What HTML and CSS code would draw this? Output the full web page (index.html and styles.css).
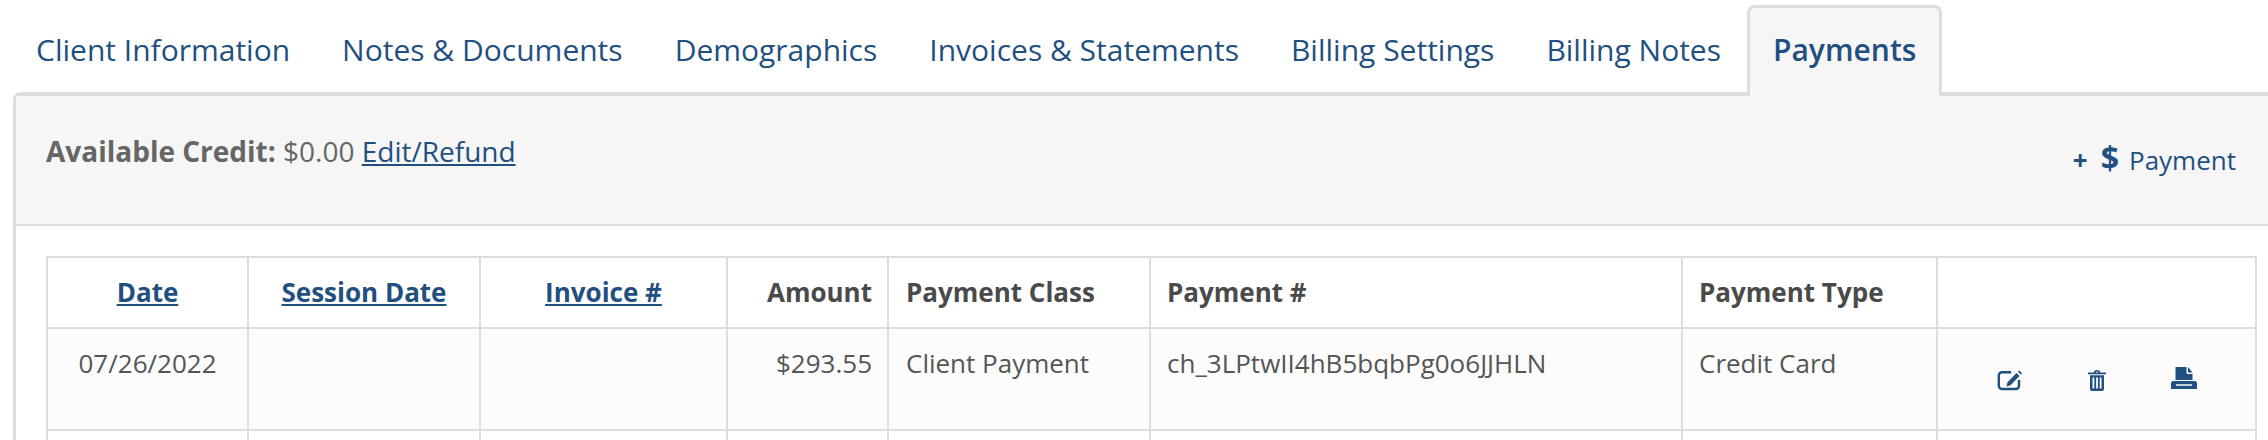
FILE: index.html
```html
<!DOCTYPE html>
<html lang="en">
<head>
    <meta charset="UTF-8">
    <title>Payments</title>
    <link rel="stylesheet" href="styles.css">
</head>
<body>
    <ul class="tabs">
        <li><a href="#">Client Information</a></li>
        <li><a href="#">Notes &amp; Documents</a></li>
        <li><a href="#">Demographics</a></li>
        <li><a href="#">Invoices &amp; Statements</a></li>
        <li><a href="#">Billing Settings</a></li>
        <li><a href="#">Billing Notes</a></li>
        <li class="active"><a href="#">Payments</a></li>
    </ul>
    <div class="panel">
        <div class="panel-head">
            <p class="credit"><strong>Available Credit:</strong> $0.00 <a href="#">Edit/Refund</a></p>
            <a class="add-payment" href="#"><span class="plus">+</span><span class="dollar">$</span>Payment</a>
        </div>
        <div class="panel-body">
            <table class="payments">
                <colgroup>
                    <col class="c-date"><col class="c-session"><col class="c-invoice"><col class="c-amount">
                    <col class="c-class"><col class="c-number"><col class="c-type"><col class="c-actions">
                </colgroup>
                <thead>
                    <tr>
                        <th class="center"><a href="#">Date</a></th>
                        <th class="center"><a href="#">Session Date</a></th>
                        <th class="center"><a href="#">Invoice #</a></th>
                        <th class="right">Amount</th>
                        <th class="pay-class">Payment Class</th>
                        <th>Payment #</th>
                        <th>Payment Type</th>
                        <th></th>
                    </tr>
                </thead>
                <tbody>
                    <tr class="shaded">
                        <td class="center">07/26/2022</td>
                        <td></td>
                        <td></td>
                        <td class="right">$293.55</td>
                        <td class="pay-class">Client Payment</td>
                        <td>ch_3LPtwII4hB5bqbPg0o6JJHLN</td>
                        <td>Credit Card</td>
                        <td class="actions">
                            <div class="action-row">
                                <a href="#" class="act-low"><svg width="26" height="21" viewBox="0 0 26 21"><path class="outline" d="M14 2.200H5a3.200 3.200 0 0 0-3.200 3.200v10.400a3.200 3.200 0 0 0 3.200 3.200h13.800a3.200 3.200 0 0 0 3.200-3.200V10"/><path d="M9.500 16.500l1-4.300 9-9.200 3 3-9 9.200zM21 1.800l1.300-1.300 2.800 2.800-1.300 1.300z"/></svg></a>
                                <a href="#" class="act-low"><svg width="18" height="21" viewBox="0 0 18 21"><path fill-rule="evenodd" d="M5.800 2.400C6 .8 7.300 0 9 0s3 .8 3.200 2.400H18V4.200H0V2.400zM7.500 2.400h3C10.300 1.700 9.800 1.400 9 1.400s-1.300 .3-1.500 1zM2 5.200h14V19c0 1.300-.8 2-2 2H4c-1.200 0-2-.7-2-2zM4.500 7.500v11h1.800v-11zM8.100 7.500v11h1.800v-11zM11.700 7.500v11h1.800v-11z"/></svg></a>
                                <a href="#"><svg width="26" height="22" viewBox="0 0 26 22"><path fill-rule="evenodd" d="M4.500 0h11v6c0 .6 .4 1 1 1h5v6h-17zM17 0l4.500 5.500H17zM2.500 14h21c1.500 0 2.500 1 2.500 2.500V22H0v-5.500C0 15 1 14 2.500 14zM5 17.200v1.600h16v-1.600z"/></svg></a>
                            </div>
                        </td>
                    </tr>
                    <tr>
                        <td></td><td></td><td></td><td></td><td></td><td></td><td></td><td></td>
                    </tr>
                </tbody>
            </table>
        </div>
    </div>
</body>
</html>
```

FILE: styles.css
```css
html, body {
    margin: 0;
    padding: 0;
    height: 440px;
    overflow: hidden;
    background-color: #fff;
}
body {
    font-family: 'Open Sans', sans-serif;
    font-size: 26px;
    color: #555;
}
a {
    color: #1f5080;
}
.tabs {
    display: flex;
    list-style: none;
    margin: 0;
    padding: 5px 0 0 10px;
    position: relative;
    z-index: 1;
}
.tabs li {
    margin-bottom: -4px;
}
.tabs a {
    display: block;
    padding: 24px 23px 28px;
    line-height: 36px;
    font-size: 30px;
    text-decoration: none;
    border: 3px solid transparent;
    border-bottom: 0;
}
.tabs .active a {
    font-weight: 600;
    background-color: #f6f6f6;
    border-color: #ddd;
    border-radius: 8px 8px 0 0;
}
.panel {
    margin: 0 -30px 0 13px;
    border: 3px solid #ddd;
    border-top-width: 4px;
    border-radius: 8px 0 0 0;
}
.panel-head {
    display: flex;
    justify-content: space-between;
    height: 128px;
    padding-right: 59px;
    padding-left: 30px;
    background-color: #f6f6f6;
    border-bottom: 2px solid #ddd;
}
.credit {
    margin: 0;
    padding-top: 37px;
    line-height: 36px;
    font-size: 28px;
    color: #666;
}
.add-payment {
    padding-top: 44px;
    line-height: 36px;
    text-decoration: none;
}
.plus {
    font-weight: 700;
    margin-right: 13px;
}
.dollar {
    font-weight: 700;
    font-size: 32px;
    margin-right: 10px;
}
.panel-body {
    padding: 30px 0 0 30px;
}
.payments {
    table-layout: fixed;
    border-collapse: collapse;
    width: 2211px;
}
.c-date { width: 201px; }
.c-session { width: 232px; }
.c-invoice { width: 247px; }
.c-amount { width: 161px; }
.c-class { width: 262px; }
.c-number { width: 532px; }
.c-type { width: 255px; }
.payments th, .payments td {
    box-sizing: border-box;
    border: 2px solid #ddd;
    padding: 0 16px;
    text-align: left;
    vertical-align: top;
}
.payments th {
    height: 71px;
    line-height: 68px;
    font-weight: 700;
    color: #4a4a4a;
}
.payments td {
    height: 102px;
    padding-top: 16px;
    line-height: 36px;
    color: #555;
}
.payments .center { text-align: center; }
.payments .right { text-align: right; padding-right: 15px; }
.payments .pay-class { padding-left: 17px; }
.shaded td { background-color: #fcfcfc; }
.payments .actions {
    padding: 38px 0 0 59px;
}
.action-row {
    display: flex;
    align-items: flex-start;
    gap: 65px;
}
.action-row a {
    display: block;
}
.act-low {
    margin-top: 3px;
}
.action-row svg {
    display: block;
    fill: #1f5080;
}
.action-row .outline {
    fill: none;
    stroke: #1f5080;
    stroke-width: 2.4;
}
```
